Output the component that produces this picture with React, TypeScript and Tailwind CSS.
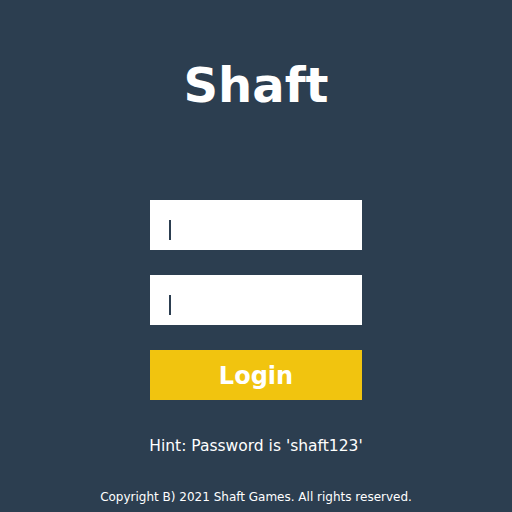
import React from 'react';

const Field: React.FC = () => (
  <div className="flex h-[50px] w-[212px] items-start bg-white pl-[19px] pt-[20px]">
    <span className="block h-[20px] w-[2px] bg-[#2c3e50]" />
  </div>
);

const App: React.FC = () => {
  return (
    <div
      className="flex h-[512px] w-[512px] flex-col items-center bg-[#2c3e50] text-white"
      style={{ fontFamily: '"DejaVu Sans", sans-serif' }}
    >
      <h1 className="mt-[57px] text-[48px] font-bold leading-[56px]">Shaft</h1>

      <form className="mt-[87px] flex flex-col gap-[25px]" onSubmit={(e) => e.preventDefault()}>
        <Field />
        <Field />
        <button
          type="submit"
          className="h-[50px] w-[212px] bg-[#f1c40f] pt-[2px] text-[24px] font-bold leading-[28px] text-white"
        >
          Login
        </button>
      </form>

      <p className="mt-[36px] text-[15.5px] leading-[20px]">Hint: Password is 'shaft123'</p>

      <p className="mt-[34px] text-[12px] leading-[15px]">Copyright B) 2021 Shaft Games. All rights reserved.</p>
    </div>
  );
};

export default App;
